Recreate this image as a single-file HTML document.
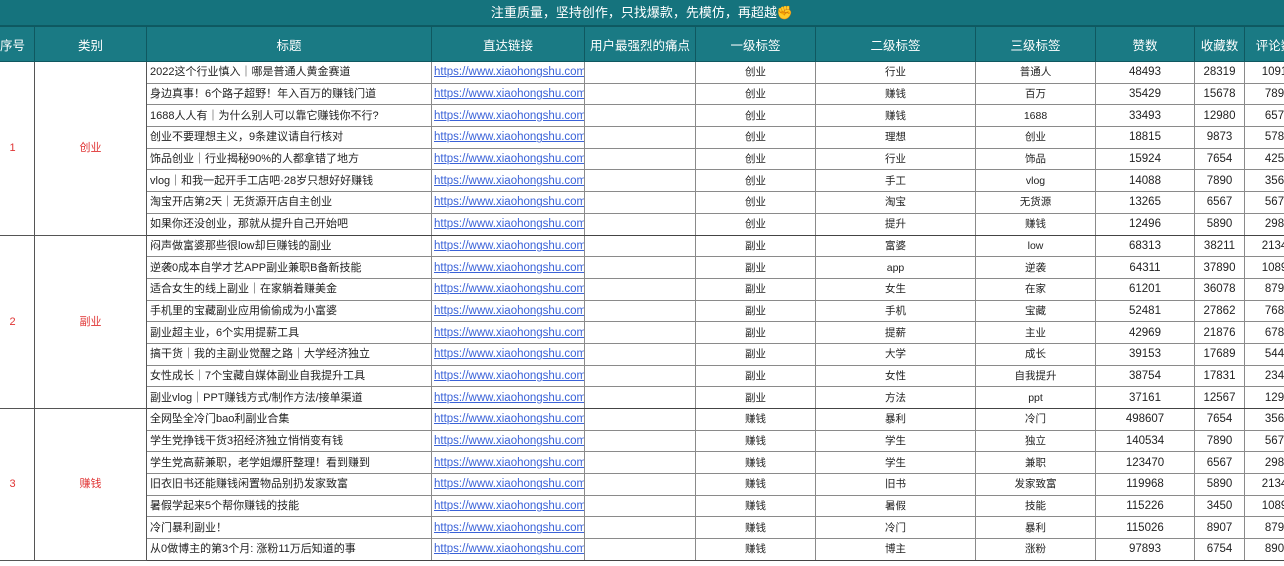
<!DOCTYPE html>
<html><head><meta charset="utf-8"><style>
body{margin:0;width:1284px;height:566px;overflow:hidden;background:#fff;font-family:"Liberation Sans","Noto Sans CJK SC",sans-serif;}
.bar{height:25px;background:#15737d;color:#fff;font-size:13px;line-height:25px;text-align:center;border-bottom:1px solid #0d5a62;}
table{border-collapse:collapse;table-layout:fixed;margin-left:-10px;width:1314px;}
th{background:#1a7a84;color:#fff;font-weight:normal;font-size:12.5px;height:34px;border:1px solid #0f5860;padding:0;white-space:nowrap;overflow:hidden;}
td{border:1px solid #8a8a8a;height:20.7px;line-height:18px;padding:0;font-size:10.5px;color:#222;text-align:center;white-space:nowrap;overflow:hidden;vertical-align:middle;}
td.t{text-align:left;padding-left:3px;font-size:11px;}
td.l{text-align:left;padding-left:2px;font-size:11.5px;color:#3a62d8;text-decoration:underline;}
td.g{color:#e03434;font-size:11px;border-color:#555;}
td.n{font-size:11.5px;}
tr.end td{border-bottom:1.5px solid #444;}
</style></head><body>
<div class="bar">注重质量，坚持创作，只找爆款，先模仿，再超越✊</div>
<table>
<colgroup><col style="width:44px"><col style="width:112px"><col style="width:285px"><col style="width:153px"><col style="width:111px"><col style="width:120px"><col style="width:160px"><col style="width:120px"><col style="width:99px"><col style="width:50px"><col style="width:60px"></colgroup>
<tr><th>序号</th><th>类别</th><th>标题</th><th>直达链接</th><th>用户最强烈的痛点</th><th>一级标签</th><th>二级标签</th><th>三级标签</th><th>赞数</th><th>收藏数</th><th>评论数</th></tr>
<tr><td class="g" rowspan="8">1</td><td class="g" rowspan="8">创业</td><td class="t">2022这个行业慎入｜哪是普通人黄金赛道</td><td class="l">https://www.xiaohongshu.com</td><td></td><td>创业</td><td>行业</td><td>普通人</td><td class="n">48493</td><td class="n">28319</td><td class="n">1091</td></tr>
<tr><td class="t">身边真事！6个路子超野！年入百万的赚钱门道</td><td class="l">https://www.xiaohongshu.com</td><td></td><td>创业</td><td>赚钱</td><td>百万</td><td class="n">35429</td><td class="n">15678</td><td class="n">789</td></tr>
<tr><td class="t">1688人人有｜为什么别人可以靠它赚钱你不行?</td><td class="l">https://www.xiaohongshu.com</td><td></td><td>创业</td><td>赚钱</td><td>1688</td><td class="n">33493</td><td class="n">12980</td><td class="n">657</td></tr>
<tr><td class="t">创业不要理想主义，9条建议请自行核对</td><td class="l">https://www.xiaohongshu.com</td><td></td><td>创业</td><td>理想</td><td>创业</td><td class="n">18815</td><td class="n">9873</td><td class="n">578</td></tr>
<tr><td class="t">饰品创业｜行业揭秘90%的人都拿错了地方</td><td class="l">https://www.xiaohongshu.com</td><td></td><td>创业</td><td>行业</td><td>饰品</td><td class="n">15924</td><td class="n">7654</td><td class="n">425</td></tr>
<tr><td class="t">vlog｜和我一起开手工店吧·28岁只想好好赚钱</td><td class="l">https://www.xiaohongshu.com</td><td></td><td>创业</td><td>手工</td><td>vlog</td><td class="n">14088</td><td class="n">7890</td><td class="n">356</td></tr>
<tr><td class="t">淘宝开店第2天｜无货源开店自主创业</td><td class="l">https://www.xiaohongshu.com</td><td></td><td>创业</td><td>淘宝</td><td>无货源</td><td class="n">13265</td><td class="n">6567</td><td class="n">567</td></tr>
<tr class="end"><td class="t">如果你还没创业，那就从提升自己开始吧</td><td class="l">https://www.xiaohongshu.com</td><td></td><td>创业</td><td>提升</td><td>赚钱</td><td class="n">12496</td><td class="n">5890</td><td class="n">298</td></tr>
<tr><td class="g" rowspan="8">2</td><td class="g" rowspan="8">副业</td><td class="t">闷声做富婆那些很low却巨赚钱的副业</td><td class="l">https://www.xiaohongshu.com</td><td></td><td>副业</td><td>富婆</td><td>low</td><td class="n">68313</td><td class="n">38211</td><td class="n">2134</td></tr>
<tr><td class="t">逆袭0成本自学才艺APP副业兼职B备新技能</td><td class="l">https://www.xiaohongshu.com</td><td></td><td>副业</td><td>app</td><td>逆袭</td><td class="n">64311</td><td class="n">37890</td><td class="n">1089</td></tr>
<tr><td class="t">适合女生的线上副业｜在家躺着赚美金</td><td class="l">https://www.xiaohongshu.com</td><td></td><td>副业</td><td>女生</td><td>在家</td><td class="n">61201</td><td class="n">36078</td><td class="n">879</td></tr>
<tr><td class="t">手机里的宝藏副业应用偷偷成为小富婆</td><td class="l">https://www.xiaohongshu.com</td><td></td><td>副业</td><td>手机</td><td>宝藏</td><td class="n">52481</td><td class="n">27862</td><td class="n">768</td></tr>
<tr><td class="t">副业超主业，6个实用提薪工具</td><td class="l">https://www.xiaohongshu.com</td><td></td><td>副业</td><td>提薪</td><td>主业</td><td class="n">42969</td><td class="n">21876</td><td class="n">678</td></tr>
<tr><td class="t">搞干货｜我的主副业觉醒之路｜大学经济独立</td><td class="l">https://www.xiaohongshu.com</td><td></td><td>副业</td><td>大学</td><td>成长</td><td class="n">39153</td><td class="n">17689</td><td class="n">544</td></tr>
<tr><td class="t">女性成长｜7个宝藏自媒体副业自我提升工具</td><td class="l">https://www.xiaohongshu.com</td><td></td><td>副业</td><td>女性</td><td>自我提升</td><td class="n">38754</td><td class="n">17831</td><td class="n">234</td></tr>
<tr class="end"><td class="t">副业vlog｜PPT赚钱方式/制作方法/接单渠道</td><td class="l">https://www.xiaohongshu.com</td><td></td><td>副业</td><td>方法</td><td>ppt</td><td class="n">37161</td><td class="n">12567</td><td class="n">129</td></tr>
<tr><td class="g" rowspan="7">3</td><td class="g" rowspan="7">赚钱</td><td class="t">全网坠全冷门bao利副业合集</td><td class="l">https://www.xiaohongshu.com</td><td></td><td>赚钱</td><td>暴利</td><td>冷门</td><td class="n">498607</td><td class="n">7654</td><td class="n">356</td></tr>
<tr><td class="t">学生党挣钱干货3招经济独立悄悄变有钱</td><td class="l">https://www.xiaohongshu.com</td><td></td><td>赚钱</td><td>学生</td><td>独立</td><td class="n">140534</td><td class="n">7890</td><td class="n">567</td></tr>
<tr><td class="t">学生党高薪兼职，老学姐爆肝整理！看到赚到</td><td class="l">https://www.xiaohongshu.com</td><td></td><td>赚钱</td><td>学生</td><td>兼职</td><td class="n">123470</td><td class="n">6567</td><td class="n">298</td></tr>
<tr><td class="t">旧衣旧书还能赚钱闲置物品别扔发家致富</td><td class="l">https://www.xiaohongshu.com</td><td></td><td>赚钱</td><td>旧书</td><td>发家致富</td><td class="n">119968</td><td class="n">5890</td><td class="n">2134</td></tr>
<tr><td class="t">暑假学起来5个帮你赚钱的技能</td><td class="l">https://www.xiaohongshu.com</td><td></td><td>赚钱</td><td>暑假</td><td>技能</td><td class="n">115226</td><td class="n">3450</td><td class="n">1089</td></tr>
<tr><td class="t">冷门暴利副业！</td><td class="l">https://www.xiaohongshu.com</td><td></td><td>赚钱</td><td>冷门</td><td>暴利</td><td class="n">115026</td><td class="n">8907</td><td class="n">879</td></tr>
<tr class="end"><td class="t">从0做博主的第3个月: 涨粉11万后知道的事</td><td class="l">https://www.xiaohongshu.com</td><td></td><td>赚钱</td><td>博主</td><td>涨粉</td><td class="n">97893</td><td class="n">6754</td><td class="n">890</td></tr>
</table>
</body></html>
